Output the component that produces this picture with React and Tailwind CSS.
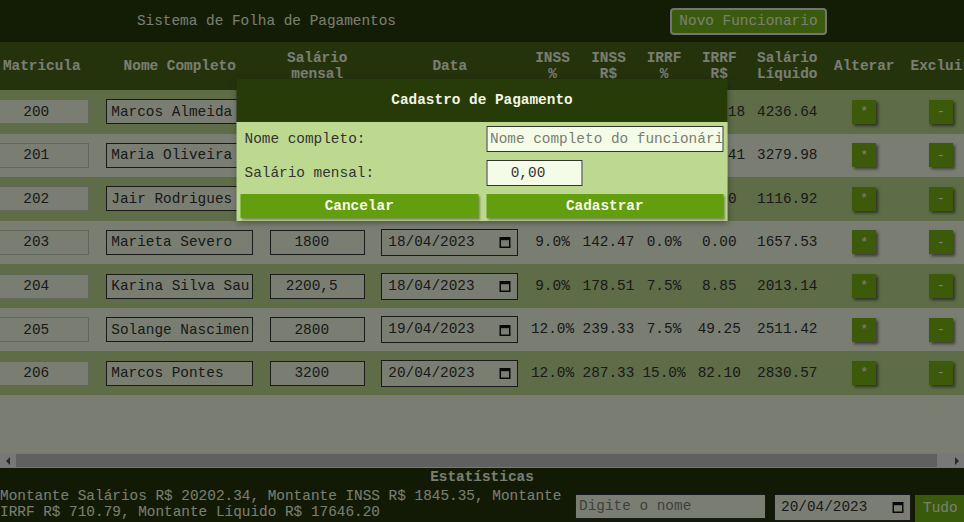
import React from "react";

const rows = [
  { id: 200, nome: "Marcos Almeida", sal: "5200", data: "17/04/2023", inssP: "14.0%", inss: "554.18", irrfP: "22.5%", irrf: "409.18", liq: "4236.64" },
  { id: 201, nome: "Maria Oliveira", sal: "3794,36", data: "17/04/2023", inssP: "12.0%", inss: "352.97", irrfP: "15.0%", irrf: "161.41", liq: "3279.98" },
  { id: 202, nome: "Jair Rodrigues", sal: "1207,48", data: "18/04/2023", inssP: "7.5%", inss: "90.56", irrfP: "0.0%", irrf: "0.00", liq: "1116.92" },
  { id: 203, nome: "Marieta Severo", sal: "1800", data: "18/04/2023", inssP: "9.0%", inss: "142.47", irrfP: "0.0%", irrf: "0.00", liq: "1657.53" },
  { id: 204, nome: "Karina Silva Saulo", sal: "2200,5", data: "18/04/2023", inssP: "9.0%", inss: "178.51", irrfP: "7.5%", irrf: "8.85", liq: "2013.14" },
  { id: 205, nome: "Solange Nascimento", sal: "2800", data: "19/04/2023", inssP: "12.0%", inss: "239.33", irrfP: "7.5%", irrf: "49.25", liq: "2511.42" },
  { id: 206, nome: "Marcos Pontes", sal: "3200", data: "20/04/2023", inssP: "12.0%", inss: "287.33", irrfP: "15.0%", irrf: "82.10", liq: "2830.57" },
];

const GRID =
  "grid grid-cols-[112px_164px_111px_154px_51.5px_60.5px_50.5px_60px_76px_78px_75px] w-[992.5px] shrink-0";

function CalIcon() {
  return (
    <svg width="12" height="12" viewBox="0 0 12 12" className="shrink-0">
      <rect x="1.25" y="1.75" width="9.5" height="9.5" fill="none" stroke="#111" strokeWidth="1.5" />
      <rect x="1" y="1" width="10" height="3.2" fill="#111" />
    </svg>
  );
}

function DateBox({ value }) {
  return (
    <div className="flex h-[27px] w-[137px] items-center justify-between border border-[#333] bg-[#f4fce4] pl-[6px] pr-[6px] text-[#333]">
      <span>{value}</span>
      <CalIcon />
    </div>
  );
}

function RowButton({ children }) {
  return (
    <button className="h-[24px] w-[24px] bg-[#7ab416] text-[13.33px] leading-none text-white shadow-[2px_2px_3px_rgba(0,0,0,0.55)]">
      {children}
    </button>
  );
}

function Scrollbar() {
  return (
    <div className="flex h-[15px] shrink-0 items-center bg-[#f1f1f1]">
      <div className="flex h-[15px] w-[16px] shrink-0 items-center justify-center">
        <svg width="6" height="8" viewBox="0 0 6 8">
          <path d="M5 0 L1 4 L5 8 Z" fill="#505050" />
        </svg>
      </div>
      <div className="h-[13px] w-[921px] shrink-0 bg-[#c1c1c1]" />
      <div className="flex-1" />
      <div className="flex h-[15px] w-[14px] shrink-0 items-center justify-center">
        <svg width="6" height="8" viewBox="0 0 6 8">
          <path d="M1 0 L5 4 L1 8 Z" fill="#505050" />
        </svg>
      </div>
    </div>
  );
}

export default function App() {
  return (
    <div className="relative flex h-[522px] w-full flex-col overflow-hidden bg-[#f4fce4] font-['Courier_New','Nimbus_Mono_PS','FreeMono','Liberation_Mono',monospace] text-[14.4px] leading-[16.5px] text-[#333]">
      <header className="flex h-[42px] shrink-0 items-center justify-around bg-[#263a0a]">
        <h1 className="text-[#f4fce4]">Sistema de Folha de Pagamentos</h1>
        <button className="h-[27px] rounded-[4px] border-2 border-[#e8e8e8] bg-[#74b41c] px-[7.5px] text-[#f4fce4]">
          Novo Funcionario
        </button>
      </header>

      <div className="h-[411px] shrink-0 overflow-hidden">
        <div className="flex w-full justify-center">
          <div className="flex shrink-0 flex-col">
            <div className={`${GRID} h-[48px] items-center bg-[#4a661a] text-center font-bold text-[#f4fce4]`}>
              <div>Matricula</div>
              <div>Nome Completo</div>
              <div>Salário<br />mensal</div>
              <div>Data</div>
              <div>INSS<br />%</div>
              <div>INSS<br />R$</div>
              <div>IRRF<br />%</div>
              <div>IRRF<br />R$</div>
              <div>Salário<br />Líquido</div>
              <div>Alterar</div>
              <div>Excluir</div>
            </div>
            {rows.map((r, i) => (
              <div
                key={r.id}
                className={`${GRID} h-[43.57px] items-center text-center ${i % 2 === 0 ? "bg-[#bcd98f]" : ""}`}
              >
                <div className="flex justify-center">
                  <input
                    readOnly
                    defaultValue={r.id}
                    className="h-[25px] w-[95px] border border-[#c4ccb6] bg-[#f4fce4] pl-[1px] pr-[12px] text-center text-[#333] outline-none"
                  />
                </div>
                <div className="flex justify-center">
                  <input
                    defaultValue={r.nome}
                    className="h-[25px] w-[147px] border border-[#333] bg-[#f4fce4] pl-[4px] pr-[2px] text-[#333] outline-none"
                  />
                </div>
                <div className="flex justify-center">
                  <input
                    defaultValue={r.sal}
                    className="h-[25px] w-[95px] border border-[#333] bg-[#f4fce4] pl-[1px] pr-[12px] text-center text-[#333] outline-none"
                  />
                </div>
                <div className="flex justify-center">
                  <DateBox value={r.data} />
                </div>
                <div>{r.inssP}</div>
                <div>{r.inss}</div>
                <div>{r.irrfP}</div>
                <div>{r.irrf}</div>
                <div>{r.liq}</div>
                <div className="flex justify-center">
                  <RowButton>*</RowButton>
                </div>
                <div className="flex justify-center">
                  <RowButton>-</RowButton>
                </div>
              </div>
            ))}
          </div>
        </div>
      </div>

      <Scrollbar />

      <footer className="flex flex-1 flex-col overflow-hidden bg-[#24340a] text-[#f4fce4]">
        <div className="pt-[1px] text-center font-bold">Estatísticas</div>
        <div className="mt-[2px] flex items-start whitespace-nowrap">
          <p className="w-[570px] shrink-0 whitespace-normal">
            Montante Salários R$ 20202.34, Montante INSS R$ 1845.35, Montante IRRF R$ 710.79, Montante Líquido R$ 17646.20
          </p>
          <input
            placeholder="Digite o nome"
            className="ml-[5px] mt-[6px] h-[25px] w-[191px] shrink-0 border border-[#333] bg-[#f4fce4] pl-[3px] text-[#333] outline-none placeholder:text-[#7f8078]"
          />
          <div className="ml-[8px] mt-[6px] shrink-0">
            <DateBox value="20/04/2023" />
          </div>
          <button className="ml-[4px] mt-[7px] h-[27px] shrink-0 bg-[#74b416] px-[8px] text-[#f4fce4]">Tudo</button>
        </div>
      </footer>

      <div className="absolute inset-0 z-10 bg-black/50" />

      <div className="absolute left-1/2 top-[79px] z-20 w-[491px] -translate-x-1/2 shadow-[0_2px_6px_rgba(0,0,0,0.35)]">
        <div className="flex h-[43px] items-center justify-center bg-[#263b08] font-bold text-[#f5f5e5]">
          Cadastro de Pagamento
        </div>
        <div className="grid grid-cols-2 gap-[8px] bg-[#bdd98f] px-[4px] pb-[3px] pt-[4px]">
          <label className="flex h-[26px] items-center pl-[4px] text-[#333]">Nome completo:</label>
          <input
            placeholder="Nome completo do funcionário"
            className="h-[26px] w-full border border-[#333] bg-[#f4fce8] pl-[3px] text-[#333] outline-none placeholder:text-[#7a7c72]"
          />
          <label className="flex h-[26px] items-center pl-[4px] text-[#333]">Salário mensal:</label>
          <div>
            <input
              defaultValue="0,00"
              className="h-[26px] w-[96px] border border-[#333] bg-[#f4fce8] pl-[1px] pr-[13px] text-center text-[#333] outline-none"
            />
          </div>
          <button className="h-[24px] bg-[#629e0e] font-bold text-[#f8f8e8] shadow-[1px_2px_2px_rgba(0,0,0,0.35)]">
            Cancelar
          </button>
          <button className="h-[24px] bg-[#629e0e] font-bold text-[#f8f8e8] shadow-[1px_2px_2px_rgba(0,0,0,0.35)]">
            Cadastrar
          </button>
        </div>
      </div>
    </div>
  );
}
